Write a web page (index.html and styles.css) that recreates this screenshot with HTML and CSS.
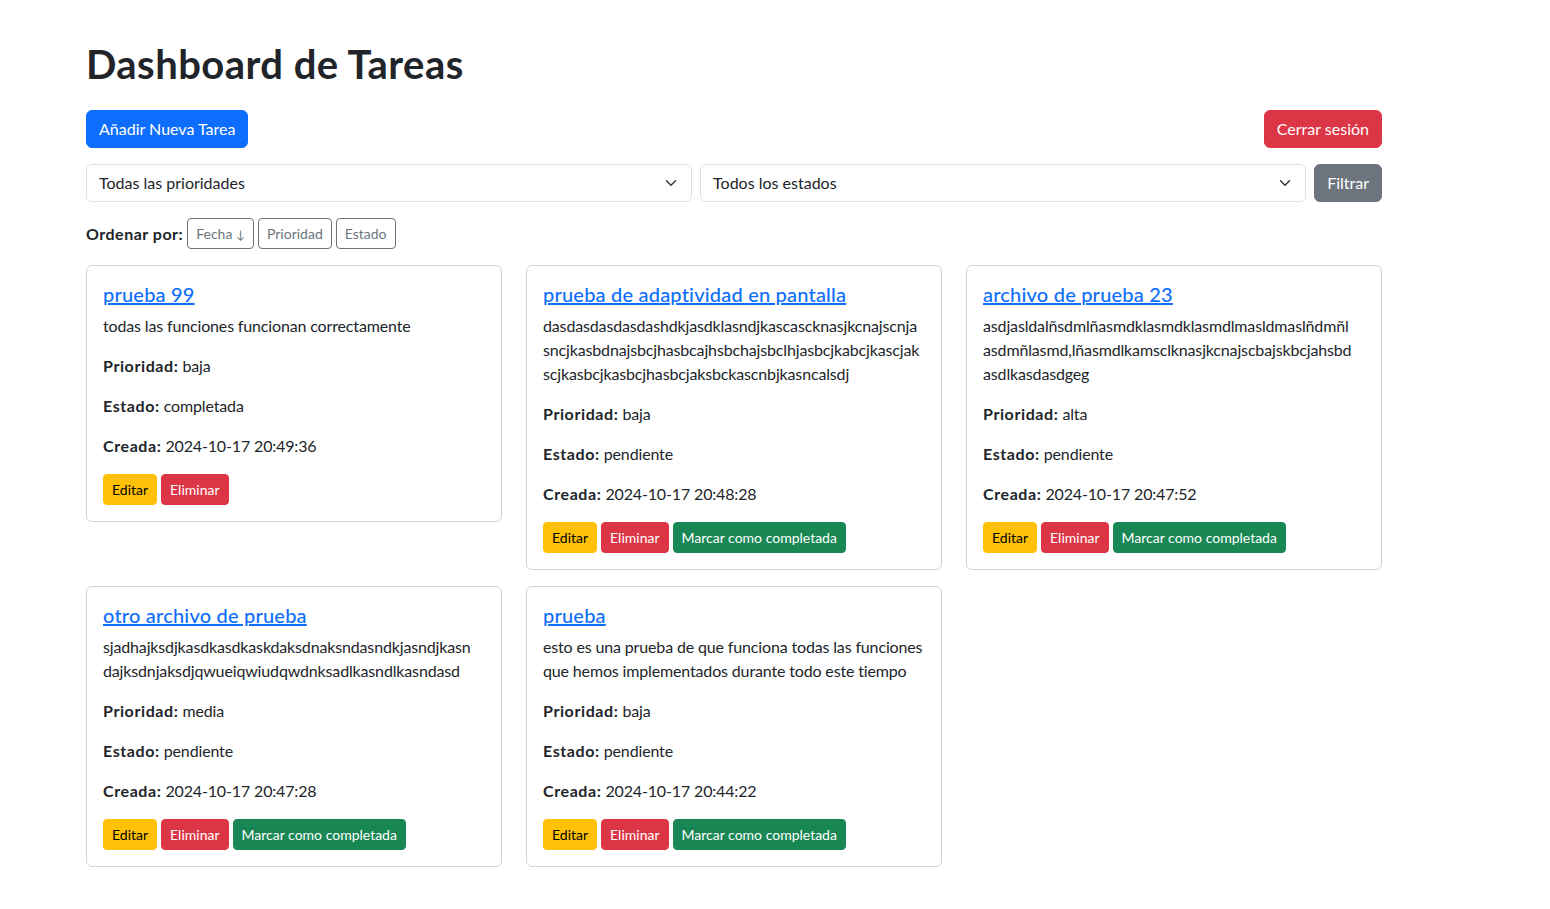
FILE: index.html
```html
<!DOCTYPE html>
<html lang="es">
<head>
<meta charset="utf-8">
<title>Dashboard de Tareas</title>
<link rel="stylesheet" href="styles.css">
</head>
<body>
<div class="container">
  <h1 class="title">Dashboard de Tareas</h1>
  <div class="topbar">
    <a class="btn btn-primary" href="#">Añadir Nueva Tarea</a>
    <a class="btn btn-danger" href="#">Cerrar sesión</a>
  </div>
  <form class="filters">
    <div class="select"><span>Todas las prioridades</span><svg class="chev" viewBox="0 0 16 16" width="16" height="12"><path d="m2 5 6 6 6-6" fill="none" stroke="#343a40" stroke-width="2" stroke-linecap="round" stroke-linejoin="round"/></svg></div>
    <div class="select"><span>Todos los estados</span><svg class="chev" viewBox="0 0 16 16" width="16" height="12"><path d="m2 5 6 6 6-6" fill="none" stroke="#343a40" stroke-width="2" stroke-linecap="round" stroke-linejoin="round"/></svg></div>
    <button type="button" class="btn btn-secondary">Filtrar</button>
  </form>
  <div class="sortbar">
    <strong>Ordenar por:</strong>
    <a class="btn btn-sm btn-outline" href="#">Fecha <span class="arrow">↓</span></a>
    <a class="btn btn-sm btn-outline" href="#">Prioridad</a>
    <a class="btn btn-sm btn-outline" href="#">Estado</a>
  </div>
  <div class="grid">
    <div class="card">
      <h5 class="card-title"><a href="#">prueba 99</a></h5>
      <p class="desc">todas las funciones funcionan correctamente</p>
      <p><strong>Prioridad:</strong> baja</p>
      <p><strong>Estado:</strong> completada</p>
      <p><strong>Creada:</strong> 2024-10-17 20:49:36</p>
      <div class="actions">
        <a class="btn btn-sm btn-warning" href="#">Editar</a>
        <a class="btn btn-sm btn-danger" href="#">Eliminar</a>
      </div>
    </div>
    <div class="card">
      <h5 class="card-title"><a href="#">prueba de adaptividad en pantalla</a></h5>
      <p class="desc">dasdasdasdasdashdkjasdklasndjkascascknasjkcnajscnja<br>sncjkasbdnajsbcjhasbcajhsbchajsbclhjasbcjkabcjkascjak<br>scjkasbcjkasbcjhasbcjaksbckascnbjkasncalsdj</p>
      <p><strong>Prioridad:</strong> baja</p>
      <p><strong>Estado:</strong> pendiente</p>
      <p><strong>Creada:</strong> 2024-10-17 20:48:28</p>
      <div class="actions">
        <a class="btn btn-sm btn-warning" href="#">Editar</a>
        <a class="btn btn-sm btn-danger" href="#">Eliminar</a>
        <a class="btn btn-sm btn-success" href="#">Marcar como completada</a>
      </div>
    </div>
    <div class="card">
      <h5 class="card-title"><a href="#">archivo de prueba 23</a></h5>
      <p class="desc">asdjasldalñsdmlñasmdklasmdklasmdlmasldmaslñdmñl<br>asdmñlasmd,lñasmdlkamsclknasjkcnajscbajskbcjahsbd<br>asdlkasdasdgeg</p>
      <p><strong>Prioridad:</strong> alta</p>
      <p><strong>Estado:</strong> pendiente</p>
      <p><strong>Creada:</strong> 2024-10-17 20:47:52</p>
      <div class="actions">
        <a class="btn btn-sm btn-warning" href="#">Editar</a>
        <a class="btn btn-sm btn-danger" href="#">Eliminar</a>
        <a class="btn btn-sm btn-success" href="#">Marcar como completada</a>
      </div>
    </div>
    <div class="card">
      <h5 class="card-title"><a href="#">otro archivo de prueba</a></h5>
      <p class="desc">sjadhajksdjkasdkasdkaskdaksdnaksndasndkjasndjkasn<br>dajksdnjaksdjqwueiqwiudqwdnksadlkasndlkasndasd</p>
      <p><strong>Prioridad:</strong> media</p>
      <p><strong>Estado:</strong> pendiente</p>
      <p><strong>Creada:</strong> 2024-10-17 20:47:28</p>
      <div class="actions">
        <a class="btn btn-sm btn-warning" href="#">Editar</a>
        <a class="btn btn-sm btn-danger" href="#">Eliminar</a>
        <a class="btn btn-sm btn-success" href="#">Marcar como completada</a>
      </div>
    </div>
    <div class="card">
      <h5 class="card-title"><a href="#">prueba</a></h5>
      <p class="desc">esto es una prueba de que funciona todas las funciones que hemos implementados durante todo este tiempo</p>
      <p><strong>Prioridad:</strong> baja</p>
      <p><strong>Estado:</strong> pendiente</p>
      <p><strong>Creada:</strong> 2024-10-17 20:44:22</p>
      <div class="actions">
        <a class="btn btn-sm btn-warning" href="#">Editar</a>
        <a class="btn btn-sm btn-danger" href="#">Eliminar</a>
        <a class="btn btn-sm btn-success" href="#">Marcar como completada</a>
      </div>
    </div>
  </div>
</div>
</body>
</html>
```
FILE: styles.css
```css
* { box-sizing: border-box; }
body {
  margin: 0;
  font-family: Lato, "Noto Sans", sans-serif;
  font-size: 16px;
  line-height: 1.5;
  color: #212529;
  background: #fff;
}
.container {
  width: 1296px;
  margin-left: 86px;
  padding-top: 40px;
}
.title {
  margin: 0 0 22px;
  font-size: 40px;
  line-height: 1.2;
  font-weight: 700;
  letter-spacing: 0.45px;
}
.topbar {
  display: flex;
  justify-content: space-between;
  margin-bottom: 16px;
}
.btn {
  display: inline-block;
  padding: 6px 12px;
  font-family: inherit;
  font-size: 16px;
  line-height: 24px;
  border: 1px solid transparent;
  border-radius: 6px;
  text-decoration: none;
  color: #fff;
  cursor: pointer;
}
.btn-primary { background: #0d6efd; border-color: #0d6efd; }
.btn-danger { background: #dc3545; border-color: #dc3545; }
.btn-secondary { background: #6c757d; border-color: #6c757d; }
.btn-warning { background: #ffc107; border-color: #ffc107; color: #000; }
.btn-success { background: #198754; border-color: #198754; }
.btn-outline { background: #fff; border-color: #6c757d; color: #6c757d; }
.btn-sm {
  padding: 4px 8px;
  font-size: 14px;
  line-height: 21px;
  border-radius: 4px;
}
.arrow { font-size: 12px; line-height: 1; }
.filters {
  display: flex;
  gap: 8px;
  margin: 0 0 16px;
}
.select {
  flex: 1;
  display: flex;
  align-items: center;
  justify-content: space-between;
  height: 38px;
  padding: 6px 12px;
  border: 1px solid #dee2e6;
  border-radius: 6px;
}
.sortbar {
  display: flex;
  align-items: center;
  gap: 4px;
  margin-bottom: 16px;
}
.sortbar strong {
  font-weight: 700;
  letter-spacing: 0.5px;
}
.grid {
  display: grid;
  grid-template-columns: repeat(3, 416px);
  column-gap: 24px;
  row-gap: 16px;
  align-items: start;
}
.card {
  border: 1px solid rgba(0, 0, 0, 0.175);
  border-radius: 6px;
  padding: 16px;
}
.card-title {
  margin: 0 0 8px;
  font-size: 20px;
  line-height: 1.2;
  font-weight: 500;
  letter-spacing: 0.2px;
}
.card-title a { color: #0d6efd; text-decoration: underline; }
.card p { margin: 0 0 16px; overflow-wrap: anywhere; letter-spacing: -0.15px; }
.card strong { font-weight: 700; letter-spacing: 0.6px; }
.actions {
  display: flex;
  flex-wrap: wrap;
  gap: 4px;
}
```
